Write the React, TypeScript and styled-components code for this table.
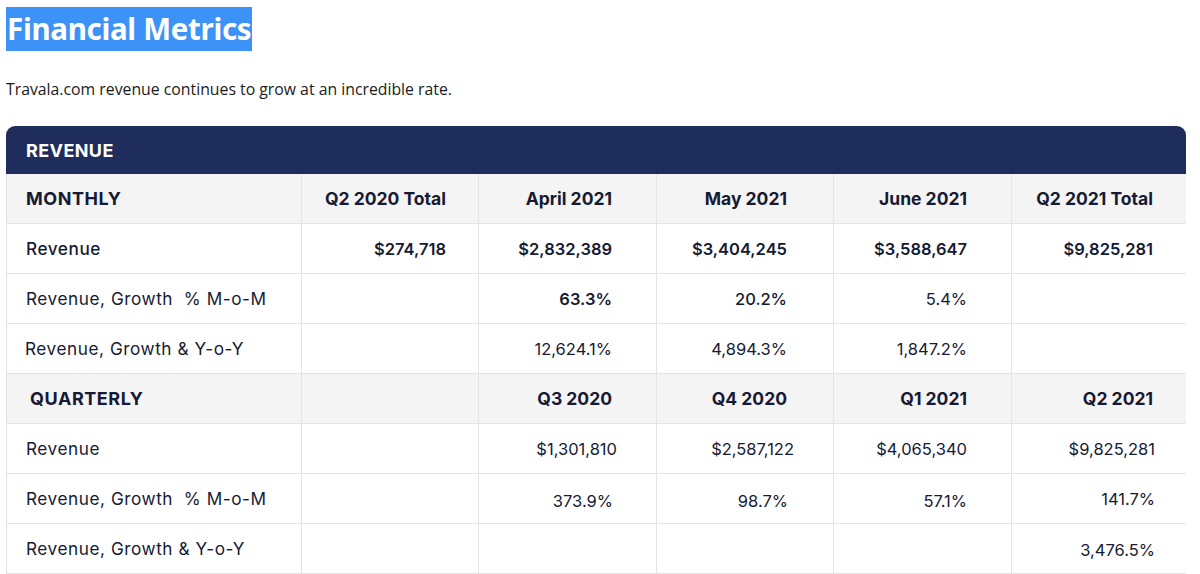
import React from "react";
import styled, { createGlobalStyle } from "styled-components";

const Global = createGlobalStyle`
  html, body { margin: 0; padding: 0; background: #ffffff; }
  body { font-family: "Open Sans", "Noto Sans", sans-serif; }
`;

const Page = styled.div`
  padding: 7px 14px 0 6px;
`;

const Title = styled.h1`
  margin: 0;
  display: inline-block;
  background: #3d92f7;
  color: #ffffff;
  font-family: "Noto Sans", "Open Sans", sans-serif;
  font-weight: 700;
  font-size: 29.5px;
  line-height: 44px;
  padding: 0 1px;
  letter-spacing: -0.3px;
`;

const Lead = styled.p`
  margin: 28px 0 0 0;
  font-family: "Open Sans", sans-serif;
  font-size: 15.8px;
  line-height: 20px;
  color: #1b1b1b;
`;

const Card = styled.div`
  margin-top: 27px;
  width: 1180px;
  border-radius: 9px 9px 0 0;
  overflow: hidden;
  font-family: "Inter", "Noto Sans", sans-serif;
  color: #161a33;
`;

const Banner = styled.div`
  background: #1f2d5d;
  height: 48px;
  display: flex;
  align-items: center;
  padding-left: 20px;
  color: #ffffff;
  font-weight: 700;
  font-size: 18px;
  letter-spacing: 0.4px;
`;

const Grid = styled.div`
  display: grid;
  grid-template-columns: 295px 177px 178px 177px 178px 175px;
  border-left: 1px solid #e2e2e2;
  border-right: 1px solid #e2e2e2;
`;

const Cell = styled.div<{ $head?: boolean; $label?: boolean; $pad?: number; $weight?: number; $dy?: number }>`
  height: 50px;
  box-sizing: border-box;
  border-bottom: 1px solid #e4e4e4;
  border-right: 1px solid #e4e4e4;
  background: ${(p) => (p.$head ? "#f4f4f4" : "#ffffff")};
  display: flex;
  align-items: center;
  justify-content: ${(p) => (p.$label ? "flex-start" : "flex-end")};
  padding-left: ${(p) => (p.$label ? p.$pad ?? 19 : 0)}px;
  padding-right: ${(p) => (p.$label ? 0 : p.$pad ?? 40)}px;
  padding-top: ${(p) => (p.$dy ?? 0) * 2}px;
  font-size: ${(p) => (p.$label ? (p.$head ? 18 : 17.2) : p.$head ? 17.5 : 16.5)}px;
  letter-spacing: ${(p) => (p.$label ? 0.55 : 0)}px;
  font-weight: ${(p) => p.$weight ?? (p.$head ? 700 : 400)};
  white-space: pre;
  &:nth-child(6n) { border-right: none; }
`;

type CellSpec = { t: string; w?: number; dy?: number };
type RowSpec = { head?: boolean; label: string; labelPad?: number; labelWeight?: number; cells: CellSpec[] };

const pads = [32, 44, 46, 44, 34];

const rows: RowSpec[] = [
  {
    head: true,
    label: "MONTHLY",
    cells: [{ t: "Q2 2020 Total" }, { t: "April 2021", dy: -1 }, { t: "May 2021", dy: -1 }, { t: "June 2021", dy: -1 }, { t: "Q2 2021 Total" }],
  },
  {
    label: "Revenue",
    labelWeight: 500,
    cells: [
      { t: "$274,718", w: 600 },
      { t: "$2,832,389", w: 600 },
      { t: "$3,404,245", w: 600 },
      { t: "$3,588,647", w: 600 },
      { t: "$9,825,281", w: 600 },
    ],
  },
  {
    label: "Revenue, Growth  % M-o-M",
    cells: [{ t: "" }, { t: "63.3%", w: 600 }, { t: "20.2%", w: 500 }, { t: "5.4%" }, { t: "" }],
  },
  {
    label: "Revenue, Growth & Y-o-Y",
    labelPad: 18,
    cells: [{ t: "" }, { t: "12,624.1%" }, { t: "4,894.3%" }, { t: "1,847.2%", dy: 0 }, { t: "" }],
  },
  {
    head: true,
    label: "QUARTERLY",
    labelPad: 23,
    cells: [{ t: "" }, { t: "Q3 2020" }, { t: "Q4 2020" }, { t: "Q1 2021", dy: -2 }, { t: "Q2 2021" }],
  },
  {
    label: "Revenue",
    cells: [{ t: "" }, { t: "$1,301,810" }, { t: "$2,587,122" }, { t: "$4,065,340", dy: -1 }, { t: "$9,825,281" }],
  },
  {
    label: "Revenue, Growth  % M-o-M",
    cells: [{ t: "" }, { t: "373.9%", dy: 2 }, { t: "98.7%", dy: 2 }, { t: "57.1%", dy: 2 }, { t: "141.7%" }],
  },
  {
    label: "Revenue, Growth & Y-o-Y",
    cells: [{ t: "" }, { t: "" }, { t: "" }, { t: "" }, { t: "3,476.5%", dy: 1 }],
  },
];

const rowPads: Record<number, number[]> = {
  5: [32, 39, 39, 44, 32],
  6: [32, 43, 45, 44, 32],
  7: [32, 44, 46, 44, 32],
};

export default function App() {
  return (
    <>
      <Global />
      <Page>
        <Title>Financial Metrics</Title>
        <Lead>Travala.com revenue continues to grow at an incredible rate.</Lead>
        <Card>
          <Banner>REVENUE</Banner>
          <Grid>
            {rows.map((r, ri) => (
              <React.Fragment key={ri}>
                <Cell $head={r.head} $label $pad={r.labelPad} $weight={r.labelWeight}>
                  {r.label}
                </Cell>
                {r.cells.map((c, ci) => (
                  <Cell key={ci} $head={r.head} $pad={(rowPads[ri] ?? pads)[ci]} $weight={c.w} $dy={c.dy}>
                    {c.t}
                  </Cell>
                ))}
              </React.Fragment>
            ))}
          </Grid>
        </Card>
      </Page>
    </>
  );
}
